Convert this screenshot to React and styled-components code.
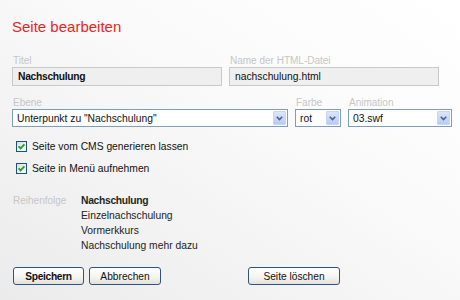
import React from "react";
import styled, { createGlobalStyle } from "styled-components";

const GlobalStyle = createGlobalStyle`
    html, body {
        margin: 0;
        padding: 0;
    }
    body {
        font-family: "Liberation Sans", Arial, sans-serif;
        color: #111;
    }
`;

const Page = styled.div`
    box-sizing: border-box;
    width: 460px;
    height: 300px;
    overflow: hidden;
    padding: 18px 0 0 12px;
    background: linear-gradient(to bottom left, #ffffff 0%, #fafafa 40%, #ebebeb 100%);
`;

const Title = styled.h1`
    margin: 0;
    font-size: 15px;
    line-height: 18px;
    font-weight: normal;
    color: #e8261e;
`;

const FieldRow = styled.div`
    display: flex;
    gap: 7px;
    margin-top: ${(p) => p.$top}px;
`;

const Field = styled.div`
    display: flex;
    flex-direction: column;
    width: ${(p) => p.$width}px;
`;

const Label = styled.label`
    font-size: 10px;
    line-height: 12px;
    color: #c6c6c6;
    padding-left: 1px;
`;

const TextBox = styled.div`
    box-sizing: border-box;
    height: 19px;
    border: 1px solid #c9c9c9;
    background: #efefef;
    padding: 0 5px;
    font-size: 10.3px;
    line-height: 17px;
    font-weight: ${(p) => (p.$bold ? "bold" : "normal")};
    letter-spacing: ${(p) => (p.$bold ? "-0.3px" : "0")};
`;

const SelectBox = styled.div`
    box-sizing: border-box;
    display: flex;
    align-items: center;
    height: 18px;
    border: 1px solid #7f9db9;
    background: #fff;
`;

const SelectText = styled.span`
    flex: 1;
    padding-left: 4px;
    font-size: 10.3px;
    white-space: nowrap;
    overflow: hidden;
`;

const ArrowBox = styled.span`
    box-sizing: border-box;
    width: 13px;
    height: 14px;
    margin-right: 1px;
    display: flex;
    align-items: center;
    justify-content: center;
    border: 1px solid #c6d5fb;
    border-radius: 1px;
    background: linear-gradient(#dbe5fc, #b9cbf3);
`;

const CheckList = styled.div`
    margin-top: 8px;
`;

const CheckRow = styled.label`
    display: flex;
    align-items: center;
    gap: 5px;
    height: 22px;
    padding-left: 4px;
    font-size: 10.3px;
`;

const CheckBox = styled.span`
    box-sizing: border-box;
    width: 11px;
    height: 11px;
    border: 1px solid #1c5180;
    background: linear-gradient(135deg, #dcdcd6, #ffffff);
    display: flex;
    align-items: center;
    justify-content: center;
`;

const OrderRow = styled.div`
    display: flex;
    margin-top: 14px;
`;

const OrderLabel = styled.span`
    width: 69px;
    padding-left: 1px;
    box-sizing: border-box;
    font-size: 10px;
    line-height: 15px;
    color: #c6c6c6;
`;

const OrderList = styled.ul`
    margin: 0;
    padding: 0;
    list-style: none;
`;

const OrderItem = styled.li`
    font-size: 10.3px;
    line-height: 15px;
    color: ${(p) => (p.$active ? "#1b2a1b" : "#222")};
    font-weight: ${(p) => (p.$active ? "bold" : "normal")};
    letter-spacing: ${(p) => (p.$active ? "-0.3px" : "0")};
`;

const ButtonRow = styled.div`
    display: flex;
    gap: 5px;
    margin-top: 14px;
    padding-left: 1px;
`;

const Button = styled.button`
    box-sizing: border-box;
    width: ${(p) => p.$width}px;
    height: 18px;
    margin-left: ${(p) => p.$offset || 0}px;
    padding: 0;
    border: 1px solid #2f5482;
    border-radius: 3px;
    background: linear-gradient(#ffffff, #f3f3ef 60%, #e2e1da);
    font-family: "Liberation Sans", Arial, sans-serif;
    font-size: 10.2px;
    font-weight: ${(p) => (p.$bold ? "bold" : "normal")};
    letter-spacing: ${(p) => (p.$bold ? "-0.3px" : "0")};
    color: #111;
    cursor: pointer;
`;

const Select = ({ value }) => (
    <SelectBox>
        <SelectText>{value}</SelectText>
        <ArrowBox>
            <svg width="7" height="5" viewBox="0 0 7 5">
                <path d="M0.8 0.8 L3.5 3.6 L6.2 0.8" fill="none" stroke="#4d6185" strokeWidth="1.6" />
            </svg>
        </ArrowBox>
    </SelectBox>
);

const Check = ({ children }) => (
    <CheckRow>
        <CheckBox>
            <svg width="9" height="9" viewBox="0 0 9 9">
                <path d="M1.6 4.3 L3.6 6.4 L7.4 2.3" fill="none" stroke="#21a121" strokeWidth="1.8" />
            </svg>
        </CheckBox>
        {children}
    </CheckRow>
);

const App = () => {
    const pages = ["Nachschulung", "Einzelnachschulung", "Vormerkkurs", "Nachschulung mehr dazu"];

    return (
        <Page>
            <GlobalStyle />
            <Title>Seite bearbeiten</Title>

            <FieldRow $top={19}>
                <Field $width={210}>
                    <Label>Titel</Label>
                    <TextBox $bold>Nachschulung</TextBox>
                </Field>
                <Field $width={210}>
                    <Label>Name der HTML-Datei</Label>
                    <TextBox>nachschulung.html</TextBox>
                </Field>
            </FieldRow>

            <FieldRow $top={11}>
                <Field $width={276}>
                    <Label>Ebene</Label>
                    <Select value={'Unterpunkt zu "Nachschulung"'} />
                </Field>
                <Field $width={46}>
                    <Label>Farbe</Label>
                    <Select value="rot" />
                </Field>
                <Field $width={104}>
                    <Label>Animation</Label>
                    <Select value="03.swf" />
                </Field>
            </FieldRow>

            <CheckList>
                <Check>Seite vom CMS generieren lassen</Check>
                <Check>Seite in Menü aufnehmen</Check>
            </CheckList>

            <OrderRow>
                <OrderLabel>Reihenfolge</OrderLabel>
                <OrderList>
                    {pages.map((p, i) => (
                        <OrderItem key={p} $active={i === 0}>{p}</OrderItem>
                    ))}
                </OrderList>
            </OrderRow>

            <ButtonRow>
                <Button $width={71} $bold>Speichern</Button>
                <Button $width={72}>Abbrechen</Button>
                <Button $width={92} $offset={82}>Seite löschen</Button>
            </ButtonRow>
        </Page>
    );
};

export default App;
